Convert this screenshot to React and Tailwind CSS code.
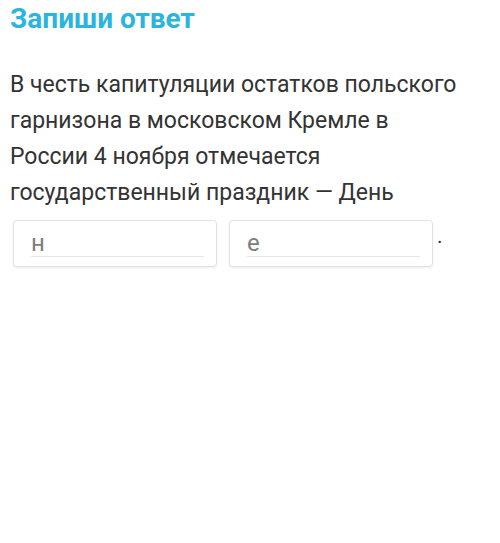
export default function App() {
  const boxes = ["н", "е"];

  return (
    <div className="w-[500px] h-[543px] bg-white px-[10px] font-['Roboto',sans-serif]">
      {/* Heading */}
      <h1 className="pt-[3px] text-[28px] leading-[32px] font-bold text-[#2bb4de]">
        Запиши ответ
      </h1>

      {/* Question */}
      <p className="mt-[32px] text-[23px] leading-[36px] text-[#333333]">
        В честь капитуляции остатков польского
        <br />
        гарнизона в московском Кремле в
        <br />
        России 4 ноября отмечается
        <br />
        государственный праздник — День
      </p>

      {/* Answer fields */}
      <div className="mt-[9px] ml-[3px] flex items-start">
        {boxes.map((letter, i) => (
          <div
            key={letter}
            className={
              i === 0
                ? "w-[204px] rounded-[4px] border border-[#e2e2e2] bg-white pt-[10px] pb-[9px] shadow-[0_1px_2px_rgba(0,0,0,0.08)]"
                : "ml-[12px] w-[204px] rounded-[4px] border border-[#e2e2e2] bg-white pt-[10px] pb-[9px] shadow-[0_1px_2px_rgba(0,0,0,0.08)]"
            }
          >
            <div className="ml-[17px] mr-[12px] border-b border-[#e6e6e6] pb-[1px] text-[24px] leading-[24px] text-[#7d7d7d]">
              {letter}
            </div>
          </div>
        ))}
        <span className="ml-[4px] mt-[6px] text-[21px] leading-[21px] text-[#333333]">
          .
        </span>
      </div>
    </div>
  );
}
